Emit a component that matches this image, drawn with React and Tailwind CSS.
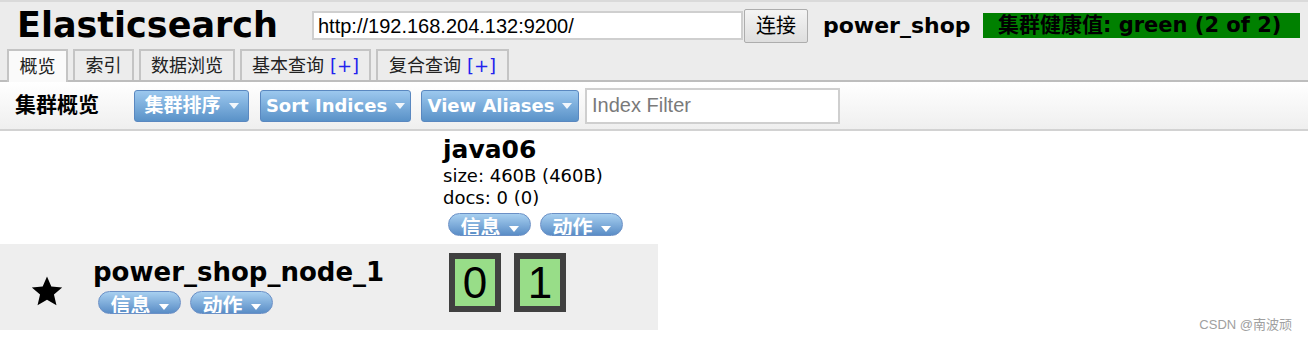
import React from "react";

const cjk = "font-['DejaVu_Sans','Noto_Sans_CJK_SC',sans-serif]";
const arial = "font-['Liberation_Sans','Noto_Sans_CJK_SC',sans-serif]";

function Caret() {
  return (
    <span className="ml-[8px] inline-block h-0 w-0 border-l-[5px] border-r-[5px] border-t-[6px] border-l-transparent border-r-transparent border-t-white/90" />
  );
}

function BlueButton({ label, width, size }) {
  return (
    <button
      className={`flex h-[32px] items-center justify-center rounded-[3px] border border-[#5a88c0] bg-gradient-to-b from-[#9cc8ee] to-[#5a92c8] font-bold text-white ${cjk} ${width} ${size}`}
    >
      {label}
      <Caret />
    </button>
  );
}

function Pill({ label }) {
  return (
    <div
      className={`flex h-[23px] w-[83px] items-start justify-center overflow-hidden rounded-full border border-[#6b90c6] bg-gradient-to-b from-[#a8d0f0] to-[#5a8dc6] pt-[2px] text-[20px] font-bold leading-[24px] text-white ${cjk}`}
    >
      {label}
      <span className="mt-[10px] ml-[8px] inline-block h-0 w-0 border-l-[5px] border-r-[5px] border-t-[6px] border-l-transparent border-r-transparent border-t-white" />
    </div>
  );
}

function Tab({ children, width, active }) {
  return (
    <div
      className={`flex items-center justify-center border-2 border-b-0 border-[#c4c4c4] text-[18px] text-[#222] ${cjk} ${width} ${
        active ? "relative z-10 -mb-[2px] h-[33px] bg-[#fafafa]" : "h-[31px] bg-[#ececec]"
      }`}
    >
      {children}
    </div>
  );
}

function Shard({ n }) {
  return (
    <div
      className={`flex h-[59px] w-[52px] items-center justify-center border-[6px] border-[#404040] bg-[#98dd88] text-[44px] leading-none text-black ${arial}`}
    >
      {n}
    </div>
  );
}

export default function App() {
  return (
    <div className="relative h-[342px] w-[1308px] overflow-hidden bg-white">
      {/* header */}
      <div className="border-t-2 border-[#dadada] bg-[#ececec]">
        <div className="flex h-[47px] items-center">
          <h1 className="ml-[17px] w-[255px] font-['DejaVu_Sans',sans-serif] text-[35px] font-bold leading-none text-black">
            Elasticsearch
          </h1>
          <input
            readOnly
            value="http://192.168.204.132:9200/"
            className={`ml-[40px] h-[29px] w-[431px] border-2 border-[#cfcfcf] bg-white px-[4px] text-[20px] text-black outline-none ${arial}`}
          />
          <button
            className={`ml-[1px] h-[34px] w-[64px] rounded-[2px] border border-[#adadad] bg-gradient-to-b from-[#f4f4f4] to-[#dedede] text-[20px] text-black ${cjk}`}
          >
            连接
          </button>
          <span className="ml-[15px] w-[160px] font-['DejaVu_Sans',sans-serif] text-[22px] font-bold text-black">
            power_shop
          </span>
          <div
            className={`flex h-[25px] w-[317px] items-center pl-[15px] text-[21px] font-bold text-black bg-[#008000] ${cjk}`}
          >
            集群健康值: green (2 of 2)
          </div>
        </div>
        <div className="flex items-end gap-[5px] border-b-2 border-[#bdbdbd] pl-[7px]">
          <Tab width="w-[61px]" active>
            概览
          </Tab>
          <Tab width="w-[61px]">索引</Tab>
          <Tab width="w-[96px]">数据浏览</Tab>
          <Tab width="w-[131px]">
            基本查询 <span className="ml-[6px] text-[#2222ee]">[+]</span>
          </Tab>
          <Tab width="w-[133px]">
            复合查询 <span className="ml-[6px] text-[#2222ee]">[+]</span>
          </Tab>
        </div>
      </div>

      {/* toolbar */}
      <div className="flex h-[49px] items-center border-b-2 border-[#d2d2d2] bg-gradient-to-b from-white to-[#efefef]">
        <span className={`ml-[15px] w-[119px] text-[21px] font-bold text-black ${cjk}`}>集群概览</span>
        <BlueButton label="集群排序" width="w-[115px]" size="text-[19px]" />
        <div className="ml-[11px]">
          <BlueButton label="Sort Indices" width="w-[151px]" size="text-[18px]" />
        </div>
        <div className="ml-[10px]">
          <BlueButton label="View Aliases" width="w-[158px]" size="text-[18px]" />
        </div>
        <input
          placeholder="Index Filter"
          className={`ml-[6px] h-[36px] w-[255px] border-2 border-[#cfcfcf] bg-white px-[5px] text-[20px] text-black outline-none placeholder:text-[#7a7a7a] ${arial}`}
        />
      </div>

      {/* cluster overview */}
      <div className="grid w-[658px] grid-cols-[435px_223px]">
        <div />
        <div className="h-[113px] pl-[8px] pt-[4px] font-['DejaVu_Sans',sans-serif] text-black">
          <div className="text-[25px] font-bold leading-[30px]">java06</div>
          <div className="text-[18px] leading-[22px]">size: 460B (460B)</div>
          <div className="text-[18px] leading-[22px]">docs: 0 (0)</div>
          <div className="mt-[4px] flex gap-[9px] pl-[5px]">
            <Pill label="信息" />
            <Pill label="动作" />
          </div>
        </div>

        <div className="flex h-[86px] bg-[#eeeeee]">
          <div className="flex w-[93px] items-center justify-center pt-[7px]">
            <svg width="34" height="32" viewBox="0 0 24 23">
              <path d="M12 1l3.1 7.2 7.8.7-5.9 5.2 1.8 7.7L12 17.8l-6.8 4 1.8-7.7L1.1 8.9l7.8-.7z" fill="#000" />
            </svg>
          </div>
          <div className="pt-[13px]">
            <div className="font-['DejaVu_Sans',sans-serif] text-[26px] font-bold leading-[31px] text-black">
              power_shop_node_1
            </div>
            <div className="mt-[3px] flex gap-[9px] pl-[5px]">
              <Pill label="信息" />
              <Pill label="动作" />
            </div>
          </div>
        </div>
        <div className="flex h-[86px] gap-[13px] bg-[#eeeeee] pl-[14px] pt-[9px]">
          <Shard n="0" />
          <Shard n="1" />
        </div>
      </div>

      <div className={`absolute right-[16px] bottom-[8px] text-[13px] text-[#a0a0a0] ${arial}`}>CSDN @南波顽</div>
    </div>
  );
}
